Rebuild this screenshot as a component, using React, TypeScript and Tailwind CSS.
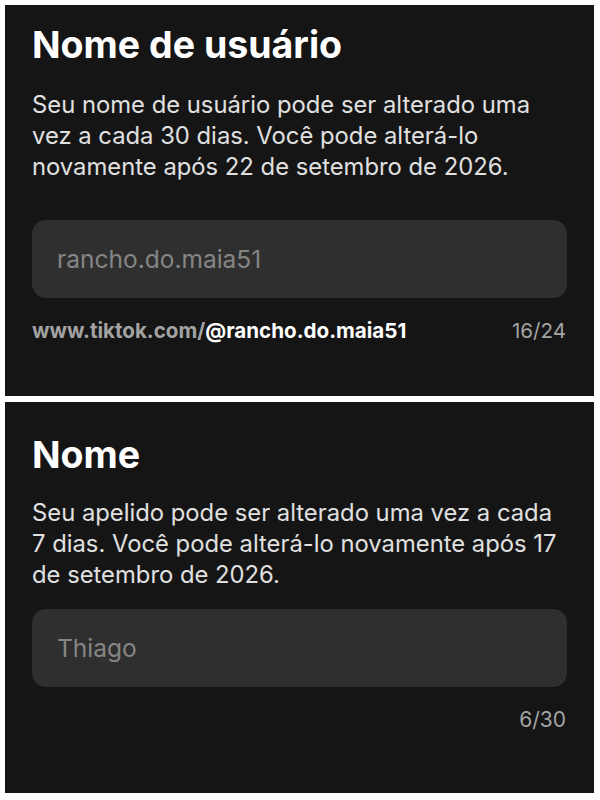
import React from "react";

export default function App() {
  const font = { fontFamily: "Inter, 'Noto Sans', sans-serif" };
  return (
    <div className="w-[600px] h-[800px] bg-white pt-[5px] pl-[5px] flex flex-col gap-[6px]" style={font}>
      <div className="w-[589px] h-[391px] bg-[#151515] px-[27px] pt-[18px] flex flex-col">
        <h1 className="text-[37.5px] leading-[44px] font-bold text-white">Nome de usuário</h1>
        <p className="mt-[22px] text-[23.8px] leading-[31px] text-[#e0e0e0] whitespace-nowrap">
          Seu nome de usuário pode ser alterado uma
          <br />
          vez a cada 30 dias. Você pode alterá-lo
          <br />
          novamente após 22 de setembro de 2026.
        </p>
        <div className="mt-[38px] h-[78px] rounded-[14px] bg-[#2f2f2f] flex items-center px-[25px]">
          <span className="text-[24.5px] text-[#858585]">rancho.do.maia51</span>
        </div>
        <div className="mt-[20px] flex justify-between items-center text-[20.6px] leading-[26px]">
          <span className="font-bold">
            <span className="text-[#a3a3a3]">www.tiktok.com/</span>
            <span className="text-white">@rancho.do.maia51</span>
          </span>
          <span className="text-[#a3a3a3] pr-[1px]">16/24</span>
        </div>
      </div>
      <div className="w-[589px] h-[391px] bg-[#151515] px-[27px] pt-[31px] flex flex-col">
        <h1 className="text-[37.5px] leading-[44px] font-bold text-white">Nome</h1>
        <p className="mt-[20px] text-[23.8px] leading-[31px] text-[#e0e0e0] whitespace-nowrap">
          Seu apelido pode ser alterado uma vez a cada
          <br />
          7 dias. Você pode alterá-lo novamente após 17
          <br />
          de setembro de 2026.
        </p>
        <div className="mt-[19px] h-[78px] rounded-[14px] bg-[#2f2f2f] flex items-center px-[25px]">
          <span className="text-[24.5px] text-[#858585]">Thiago</span>
        </div>
        <div className="mt-[20px] flex justify-end items-center text-[21px] leading-[26px]">
          <span className="text-[#a3a3a3] pr-[1px]">6/30</span>
        </div>
      </div>
    </div>
  );
}
